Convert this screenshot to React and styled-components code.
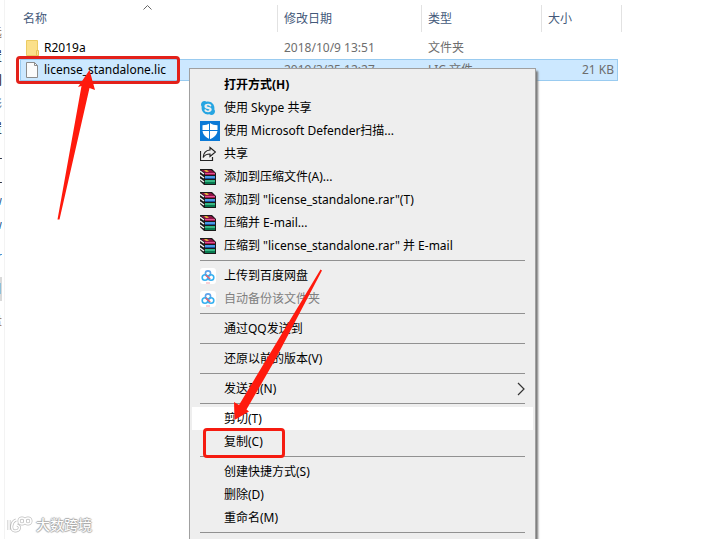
import React from "react";
import styled, { createGlobalStyle } from "styled-components";
import { FaSkype } from "react-icons/fa";

const App = () => {
  return (
    <Explorer>
      <GlobalStyle />
      <NavPane>
        {navItems.map(({ label, tone, active, spaced }, index) => (
          <NavItem key={index} $tone={tone} $active={active} $spaced={spaced}>
            {label}
          </NavItem>
        ))}
      </NavPane>
      <FileList />
      <ContextMenu />
      <FileHighlight />
      <CopyHighlight />
      <Arrows aria-hidden="true">
        <polygon points="57.5,219.5 81.5,86 78,87 89.5,70 95,90 89.5,88 59.5,219.5" />
        <polygon points="320.5,269.5 239,405 234,402 234.5,420 249,411.5 246.5,409.5 275,360 322,270.5" />
      </Arrows>
      <Watermark>
        <WatermarkLogo />
        大数跨境
      </Watermark>
    </Explorer>
  );
};

const FileList = () => (
  <Files>
    <thead>
      <HeaderRow>
        <HeaderCell aria-sort="ascending">
          <SortCaret viewBox="0 0 9 5">
            <path d="M.5 4.5l4-4 4 4" fill="none" stroke="#666" />
          </SortCaret>
          名称
        </HeaderCell>
        <HeaderCell>修改日期</HeaderCell>
        <HeaderCell>类型</HeaderCell>
        <HeaderCell>大小</HeaderCell>
      </HeaderRow>
    </thead>
    <tbody>
      <FileRow>
        <NameCell>
          <FolderIcon />
          R2019a
        </NameCell>
        <Cell>2018/10/9 13:51</Cell>
        <Cell>文件夹</Cell>
        <SizeCell />
      </FileRow>
      <FileRow $selected>
        <NameCell>
          <DocumentIcon />
          license_standalone.lic
        </NameCell>
        <Cell>2019/3/25 12:27</Cell>
        <Cell>LIC 文件</Cell>
        <SizeCell>21 KB</SizeCell>
      </FileRow>
    </tbody>
  </Files>
);

const ContextMenu = () => (
  <Menu role="menu">
    {menuGroups.map((group, index) => (
      <React.Fragment key={index}>
        {group.map(({ label, Icon, bold, hovered, disabled, submenu }) => (
          <MenuItem
            key={label}
            role="menuitem"
            disabled={disabled}
            $bold={bold}
            $hovered={hovered}
          >
            <IconSlot>{Icon && <Icon />}</IconSlot>
            {label}
            {submenu && <SubmenuArrow />}
          </MenuItem>
        ))}
        <Separator />
      </React.Fragment>
    ))}
  </Menu>
);

const FolderIcon = () => (
  <svg width="14" height="16" viewBox="0 0 14 16">
    <path d="M.5.5h11v10l1 1v4H.5z" fill="#fbe08a" stroke="#eccb62" />
    <path d="M10.5 10.5h2v5h-2z" fill="#fbe59a" stroke="#e6c256" />
  </svg>
);

const DocumentIcon = () => (
  <svg width="14" height="16" viewBox="0 0 14 16">
    <path d="M.5.5h8l3 3v12H.5z" fill="#fbfbfb" stroke="#8c8c8c" />
    <path d="M8.5.5v3h3" fill="none" stroke="#8c8c8c" />
  </svg>
);

const SkypeIcon = () => <FaSkype size={16} color="#26a5e2" />;

const DefenderIcon = () => (
  <svg width="20" height="20" viewBox="0 0 20 20">
    <path d="M0 0h20v20H0z" fill="#0b79d6" />
    <path
      d="M10 2c2 1.5 4.5 2.200 7.500 2.200v5c0 4.300-3.500 7.300-7.500 9-4-1.700-7.500-4.700-7.500-9v-5C5.500 4.200 8 3.500 10 2z"
      fill="#fff"
    />
    <path d="M9.500 1v18M2 9.500h16" stroke="#0b79d6" />
  </svg>
);

const ShareIcon = () => (
  <svg width="16" height="16" viewBox="0 0 16 16">
    <path
      d="M.5 5v9.500h12V11M10 1.500L15.500 6 10 10.500V8C6.500 8 4.500 9 3.200 11.500 3.500 7 6 4.300 10 4z"
      fill="none"
      stroke="#222"
      strokeWidth="1.200"
    />
  </svg>
);

const RarIcon = () => (
  <svg width="16" height="16" viewBox="0 0 16 16">
    <path d="M0 0h12l4 4v12H4l-4-4z" fill="#1a1a1a" />
    <path d="M1 1h10l4 3H5z" fill="#8d1245" />
    <path d="M4 1h3l2 2H6z" fill="#e0b13a" />
    <path d="M5 4h10v1H5z" fill="#e05590" />
    <path d="M5 5h10v1H5z" fill="#a3164f" />
    <path d="M5 7h10v2H5z" fill="#4b9ae6" />
    <path d="M5 9h10v1H5z" fill="#14539f" />
    <path d="M5 11h10v2H5z" fill="#37b884" />
    <path d="M5 13h10v2H5z" fill="#08784f" />
    <path d="M0 2l4 3M0 6l4 3M0 10l4 3" stroke="#f0f0f0" strokeWidth="1.500" />
  </svg>
);

const NetdiskIcon = () => (
  <svg width="16" height="16" viewBox="0 0 16 16">
    <rect width="16" height="16" rx="3" fill="#fff" />
    <g fill="none" strokeWidth="1.600">
      <circle cx="8" cy="5.500" r="2.600" stroke="#5fa3ea" />
      <circle cx="5" cy="9.500" r="2.800" stroke="#35b0f0" />
      <circle cx="11" cy="9.500" r="2.800" stroke="#35b0f0" />
      <path d="M5.800 7L8 9l2.200 2" stroke="#e8606f" />
    </g>
    <path d="M6 15h4" stroke="#f0a0aa" />
  </svg>
);

const SubmenuArrow = () => (
  <Chevron viewBox="0 0 8 14">
    <path d="M1 1l6 6-6 6" fill="none" stroke="#333" strokeWidth="1.200" />
  </Chevron>
);

const WatermarkLogo = () => (
  <svg width="26" height="18" viewBox="0 0 26 18" fill="none">
    <g stroke="#bdbdbd" strokeWidth="3">
      <path d="M2 4v10M9 4C4 6 3 15 8 15s6-5 2-6" />
      <circle cx="15" cy="5" r="3" />
      <circle cx="21" cy="5" r="3" />
    </g>
    <g stroke="#fff" strokeWidth="1.600">
      <path d="M2 4v10M9 4C4 6 3 15 8 15s6-5 2-6" />
      <circle cx="15" cy="5" r="3" />
      <circle cx="21" cy="5" r="3" />
    </g>
  </svg>
);

const navItems = [
  { label: "远", tone: "#8a6a45" },
  { label: "置" },
  { label: "门" },
  { label: "彩", tone: "#57708a" },
  { label: "置" },
  { label: "_" },
  { label: "_" },
  { label: "w", tone: "#2b5f93" },
  { label: "w", tone: "#2b5f93" },
  { label: "r", tone: "#2f7fc0", spaced: true },
  { label: "目", active: true, spaced: true },
  { label: "盘", tone: "#9a6b3a", spaced: true }
];

const menuGroups = [
  [
    { label: "打开方式(H)", bold: true },
    { label: "使用 Skype 共享", Icon: SkypeIcon },
    { label: "使用 Microsoft Defender扫描...", Icon: DefenderIcon },
    { label: "共享", Icon: ShareIcon },
    { label: "添加到压缩文件(A)...", Icon: RarIcon },
    { label: '添加到 "license_standalone.rar"(T)', Icon: RarIcon },
    { label: "压缩并 E-mail...", Icon: RarIcon },
    { label: '压缩到 "license_standalone.rar" 并 E-mail', Icon: RarIcon }
  ],
  [
    { label: "上传到百度网盘", Icon: NetdiskIcon },
    { label: "自动备份该文件夹", Icon: NetdiskIcon, disabled: true }
  ],
  [{ label: "通过QQ发送到" }],
  [{ label: "还原以前的版本(V)" }],
  [{ label: "发送到(N)", submenu: true }],
  [{ label: "剪切(T)", hovered: true }, { label: "复制(C)" }],
  [{ label: "创建快捷方式(S)" }, { label: "删除(D)" }, { label: "重命名(M)" }]
];

const GlobalStyle = createGlobalStyle`
  * {
    box-sizing: border-box;
  }
  body {
    margin: 0;
    background: #fff;
    font: 12px/16px "Noto Sans", "Noto Sans CJK SC", sans-serif;
  }
`;

const Explorer = styled.main`
  position: relative;
  display: flex;
  height: 100vh;
  overflow: hidden;
`;

const NavPane = styled.nav`
  flex: none;
  width: 5px;
  padding: 21px 2px 0 0;
  border-right: 1px solid #f3f3f3;
`;

const NavItem = styled.div`
  display: flex;
  justify-content: flex-end;
  align-items: center;
  height: 24px;
  margin-top: ${({ $spaced }) => ($spaced ? "8px" : 0)};
  overflow: hidden;
  color: ${({ $tone }) => $tone || "#111"};
  background: ${({ $active }) => ($active ? "#d9d9d9" : "none")};
`;

const Files = styled.table`
  display: block;
  flex: 1;
  max-width: 617px;
  padding: 5px 0 0 12px;
  color: #6d6d6d;

  thead,
  tbody {
    display: block;
  }
`;

const HeaderRow = styled.tr`
  display: grid;
  grid-template-columns: 261px 144px 120px 1fr;
  margin-bottom: 5px;
`;

const HeaderCell = styled.th`
  position: relative;
  height: 27px;
  padding: 6px 6px 0;
  border-right: 1px solid #e2e2e2;
  color: #44597a;
  font-weight: normal;
  text-align: left;
`;

const SortCaret = styled.svg`
  position: absolute;
  top: 0;
  left: 50%;
  width: 9px;
  height: 5px;
  margin-left: -4px;
`;

const FileRow = styled.tr`
  display: grid;
  grid-template-columns: 258px 144px 120px 1fr;
  margin: 0 4px 0 3px;
  height: 22px;
  align-items: center;
  background: ${({ $selected }) => ($selected ? "#cce8ff" : "none")};
  outline: ${({ $selected }) => ($selected ? "1px solid #99cbf0" : "none")};
  outline-offset: -1px;
`;

const Cell = styled.td`
  padding: 0 6px;
`;

const NameCell = styled(Cell)`
  display: flex;
  align-items: center;
  gap: 4px;
  color: #000;
`;

const SizeCell = styled(Cell)`
  padding-right: 4px;
  text-align: right;
`;

const Menu = styled.div`
  position: absolute;
  top: 68px;
  left: 189px;
  display: flex;
  flex-direction: column;
  width: 347px;
  padding: 4px 2px;
  border: 1px solid #a0a0a0;
  background: #eee;
  box-shadow: 2px 3px 2px #777;
`;

const MenuItem = styled.button`
  display: flex;
  align-items: center;
  height: 23px;
  padding: 0 8px;
  border: 0;
  background: ${({ $hovered }) => ($hovered ? "#fff" : "none")};
  color: #000;
  font: inherit;
  font-weight: ${({ $bold }) => ($bold ? "bold" : "normal")};
  white-space: nowrap;

  &:disabled {
    color: #808080;
  }
`;

const IconSlot = styled.span`
  display: flex;
  flex: none;
  width: 24px;
`;

const Chevron = styled.svg`
  width: 8px;
  height: 14px;
  margin-left: auto;
`;

const Separator = styled.hr`
  width: auto;
  height: 1px;
  margin: 3px 8px;
  border: 0;
  background: #919191;
`;

const Highlight = styled.div`
  position: absolute;
  border: 3px solid #e3211a;
  border-radius: 4px;
  pointer-events: none;
`;

const FileHighlight = styled(Highlight)`
  top: 56px;
  left: 16px;
  width: 164px;
  height: 28px;
`;

const CopyHighlight = styled(Highlight)`
  top: 428px;
  left: 203px;
  width: 82px;
  height: 30px;
  border-color: #f51b10;
`;

const Arrows = styled.svg`
  position: absolute;
  inset: 0;
  width: 100%;
  height: 100%;
  fill: #ff1a0d;
  pointer-events: none;
`;

const Watermark = styled.div`
  position: absolute;
  bottom: 4px;
  left: 7px;
  display: flex;
  align-items: center;
  gap: 3px;
  color: #fff;
  font-size: 14px;
  line-height: 20px;
  text-shadow: 1px 0 1px #aaa, -1px 0 1px #aaa, 0 1px 1px #aaa, 0 -1px 1px #aaa;
`;

export default App;
